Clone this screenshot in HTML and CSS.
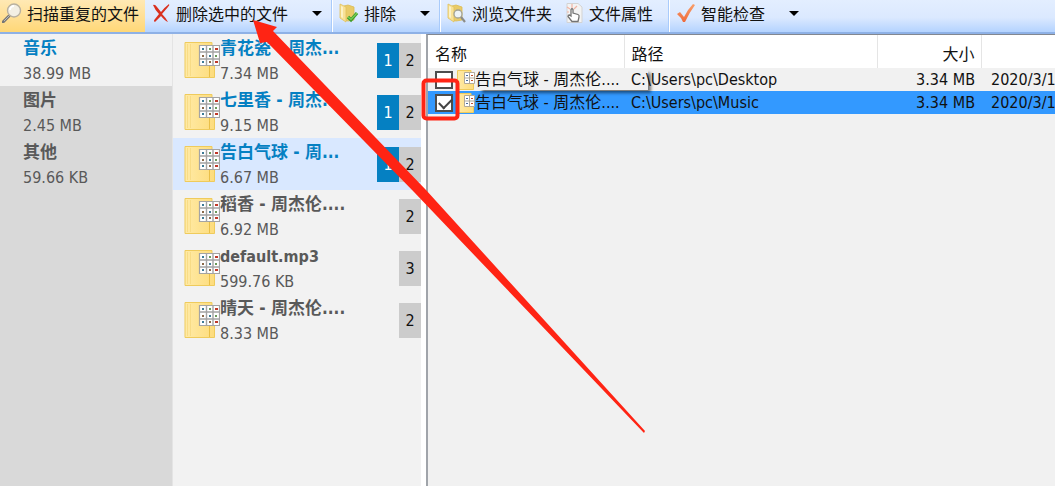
FILE: index.html
```html
<!DOCTYPE html>
<html lang="zh-CN">
<head>
  <meta charset="UTF-8">
  <title>重复文件</title>
  <link rel="stylesheet" href="styles.css">
</head>
<body>
  <svg class="defs" width="0" height="0" aria-hidden="true">
    <defs>
      <linearGradient id="paper" x1="0" x2="1">
        <stop offset="0" stop-color="#ffeaa6"/>
        <stop offset="1" stop-color="#fddc7c"/>
      </linearGradient>
      <linearGradient id="tick" x1="0" y1="0" x2="0" y2="1">
        <stop offset="0" stop-color="#f9a06a"/>
        <stop offset="1" stop-color="#ee6a3c"/>
      </linearGradient>
    </defs>
    <symbol id="folder" viewBox="0 0 36 38">
      <path d="M1 1.500H28V5H30.500V36.500H1Z" fill="url(#paper)" stroke="#efcb5c"/>
      <path d="M3.500 3V35M6.500 3V35" fill="none" stroke="#f8dc86"/>
      <path d="M25.500 24V36" fill="none" stroke="#e9bf48"/>
      <path d="M15.500 4.500H35.500V24.500H15.500Z" fill="#fff" stroke="#a4a4a4" stroke-width="1.200"/>
      <path d="M22.500 4V24M29 4V24M15 11H36M15 18H36" stroke="#a4a4a4" stroke-width="1.400"/>
      <g fill="#3c7a96"><path d="M18 7h2v2h-2zM25 14h2v2h-2zM18 20h2v2h-2z"/></g>
      <g fill="#6a9a5a"><path d="M25 7h2v2h-2zM31 14h2v2h-2z"/></g>
      <g fill="#c0392b"><path d="M31 7h3v2h-3zM31 20h3v2h-3z"/></g>
      <g fill="#8a6a4a"><path d="M18 14h2v2h-2zM25 20h2v2h-2z"/></g>
    </symbol>
    <symbol id="folder-small" viewBox="0 0 18 20">
      <path d="M.5.500H14V3H16.500V19.500H.5Z" fill="url(#paper)" stroke="#efcb5c"/>
      <path d="M7.500 2.500H17.500V13.500H7.500ZM12.500 2.500V13.500M7.500 8H17.500" fill="#fff" stroke="#b0a99a"/>
      <path d="M9 5h2v1H9zM9 10h2v1H9z" fill="#4a6ea0"/>
      <path d="M14 5h2v1h-2zM14 10h2v1h-2z" fill="#c0502b"/>
    </symbol>
    <symbol id="folder-tool" viewBox="0 0 20 20">
      <path d="M5 3L9 2L15 4V17L9 18L5 17Z" fill="#e9cb68" stroke="#dcbb52" stroke-width=".8"/>
      <path d="M1 1L7 4V19L1 15Z" fill="#f8e196" stroke="#e0c05a" stroke-width=".8"/>
      <path d="M2 3L4 4V15L2 14Z" fill="#fdf2c4"/>
    </symbol>
  </svg>

  <header class="toolbar">
    <button class="tool tool-scan" type="button">
      <svg class="tool-icon" viewBox="0 0 20 20">
        <path d="M7 13L1 19" stroke="#777" stroke-width="3" stroke-linecap="round"/>
        <path d="M8 12L2 18" stroke="#bbb" stroke-width="1"/>
        <circle cx="12" cy="7.500" r="6.500" fill="#f3efe4" stroke="#b9b1a0" stroke-width="1.400"/>
        <path d="M8 7a4 4 0 0 1 4-4" fill="none" stroke="#fff" stroke-width="2"/>
      </svg>
      <span>扫描重复的文件</span>
    </button>
    <button class="tool tool-menu" type="button">
      <svg class="tool-icon" viewBox="0 0 20 20">
        <path d="M2 2Q4 1 6 4L10 9Q14 4 18 1Q19 2 17 4L11 11Q15 15 17 19Q14 18 10 13Q6 17 4 19Q2 18 4 16L8 11Q4 7 2 2Z" fill="#d9301f"/>
      </svg>
      <span>删除选中的文件</span>
      <i class="caret"></i>
    </button>
    <button class="tool tool-menu group" type="button">
      <svg class="tool-icon" viewBox="0 0 20 20">
        <use href="#folder-tool"/>
        <path d="M9 14L12 17L18 10" fill="none" stroke="#3d9c2c" stroke-width="3.200"/>
        <path d="M9 14L12 16.500L18 10" fill="none" stroke="#7ccf55" stroke-width="1.200"/>
      </svg>
      <span>排除</span>
      <i class="caret"></i>
    </button>
    <button class="tool group" type="button">
      <svg class="tool-icon" viewBox="0 0 20 20">
        <use href="#folder-tool"/>
        <circle cx="11" cy="11" r="4" fill="#eef3f5" stroke="#a2a294" stroke-width="1.300"/>
        <path d="M14 14L18 19" stroke="#8c8c88" stroke-width="2.200"/>
      </svg>
      <span>浏览文件夹</span>
    </button>
    <button class="tool tool-last" type="button">
      <svg class="tool-icon" viewBox="0 0 20 20">
        <path d="M3 .5H14L18 4V19.500H3Z" fill="#f3f3f3" stroke="#d3d3d3"/>
        <path d="M8 1V5M3 4L6 6M13 3L10 6M3 9H5" stroke="#f1b4a4" stroke-width="1.200"/>
        <path d="M7 13V6.500Q8 5 9 6.500V10L14 11.500Q15.500 12 15 14L14 18.500H8L4 13.500Q4 12 5.500 12Z" fill="#fff" stroke="#737373" stroke-width="1.300"/>
      </svg>
      <span>文件属性</span>
    </button>
    <button class="tool tool-menu group" type="button">
      <svg class="tool-icon" viewBox="0 0 20 20">
        <path d="M1 11L4 9L8 14Q12 6 17 1L19 2Q13 10 9 19H7Q5 14 1 11Z" fill="url(#tick)"/>
      </svg>
      <span>智能检查</span>
      <i class="caret"></i>
    </button>
  </header>

  <main class="panes">
    <nav class="categories">
      <button class="entry active" type="button"><b>音乐</b><span>38.99 MB</span></button>
      <button class="entry" type="button"><b>图片</b><span>2.45 MB</span></button>
      <button class="entry" type="button"><b>其他</b><span>59.66 KB</span></button>
    </nav>

    <section class="files">
      <button class="file marked" type="button">
        <svg class="file-icon"><use href="#folder"/></svg>
        <span class="entry"><b>青花瓷 - 周杰...</b><span>7.34 MB</span></span>
        <span class="count picked">1</span><span class="count">2</span>
      </button>
      <button class="file marked" type="button">
        <svg class="file-icon"><use href="#folder"/></svg>
        <span class="entry"><b>七里香 - 周杰...</b><span>9.15 MB</span></span>
        <span class="count picked">1</span><span class="count">2</span>
      </button>
      <button class="file marked current" type="button">
        <svg class="file-icon"><use href="#folder"/></svg>
        <span class="entry"><b>告白气球 - 周...</b><span>6.67 MB</span></span>
        <span class="count picked">1</span><span class="count">2</span>
      </button>
      <button class="file" type="button">
        <svg class="file-icon"><use href="#folder"/></svg>
        <span class="entry"><b>稻香 - 周杰伦....</b><span>6.92 MB</span></span>
        <span class="count">2</span>
      </button>
      <button class="file" type="button">
        <svg class="file-icon"><use href="#folder"/></svg>
        <span class="entry"><b class="latin">default.mp3</b><span>599.76 KB</span></span>
        <span class="count">3</span>
      </button>
      <button class="file" type="button">
        <svg class="file-icon"><use href="#folder"/></svg>
        <span class="entry"><b>晴天 - 周杰伦....</b><span>8.33 MB</span></span>
        <span class="count">2</span>
      </button>
    </section>

    <section class="details">
      <table>
        <colgroup><col class="col-name"><col class="col-path"><col class="col-size"><col></colgroup>
        <thead>
          <tr><th>名称</th><th>路径</th><th class="num">大小</th><th></th></tr>
        </thead>
        <tbody>
          <tr>
            <td class="name">
              <div class="name-box">
                <input type="checkbox" id="dup1">
                <svg class="row-icon"><use href="#folder-small"/></svg>
                <label for="dup1">告白气球 - 周杰伦....</label>
                <span class="tip"></span>
              </div>
            </td>
            <td>C:\Users\pc\Desktop</td>
            <td class="num">3.34 MB</td>
            <td>2020/3/1</td>
          </tr>
          <tr class="selected">
            <td class="name">
              <div class="name-box">
                <input type="checkbox" id="dup2" checked>
                <svg class="row-icon"><use href="#folder-small"/></svg>
                <label for="dup2">告白气球 - 周杰伦....</label>
              </div>
            </td>
            <td>C:\Users\pc\Music</td>
            <td class="num">3.34 MB</td>
            <td>2020/3/1</td>
          </tr>
        </tbody>
      </table>
    </section>
  </main>

  <!-- red pointer and frame drawn over the window -->
  <svg class="marks" width="660" height="440" viewBox="0 0 660 440" aria-hidden="true">
    <path d="M253 20L277 27L273 31L426 190L645 431L644 433L414 192L267 42L260 43Z" fill="#ff2414"/>
    <rect x="423.500" y="80.500" width="34" height="38" rx="3" fill="none" stroke="#ff2414" stroke-width="4"/>
  </svg>
</body>
</html>
```
FILE: styles.css
```css
:root {
  --accent: #0580c2;
  --pane: #f2f2f2;
  --text: #595959;
}
* { box-sizing: border-box; margin: 0; padding: 0; }
body {
  display: flex;
  flex-direction: column;
  min-height: 100vh;
  overflow: hidden;
  position: relative;
  background: #fff;
  color: #111;
  font-family: "DejaVu Sans Condensed", "Noto Sans CJK SC", sans-serif;
  font-size: 16px;
}
button {
  border: none;
  background: none;
  color: inherit;
  font: inherit;
  text-align: left;
}
.defs { position: absolute; }

/* toolbar */
.toolbar {
  display: flex;
  height: 34px;
  border-bottom: 2px solid #8eb1e6;
  background: linear-gradient(#e3eeff, #dbe9ff 55%, #b4d3ff);
}
.tool {
  display: flex;
  align-items: center;
  gap: 5px;
  padding: 0 6px 6px;
  white-space: nowrap;
}
.tool-scan {
  padding-left: 2px;
  padding-right: 6px;
  background: linear-gradient(#ffe9b4, #ffe097 50%, #ffd877);
}
.tool-menu { padding-right: 9px; }
.tool-last { margin-right: 9px; }
.group { box-shadow: -1px 0 #fff, -2px 0 #a9cbfb; margin-left: 2px; }
.tool-icon { width: 20px; height: 20px; flex: none; }
.caret {
  margin-left: 19px;
  border: 5px solid transparent;
  border-top-color: #000;
  border-bottom: 0;
}

.panes { display: flex; flex: 1; }

/* name over size */
.entry {
  display: flex;
  flex-direction: column;
  height: 52px;
  padding-top: 2px;
  line-height: 25px;
  color: var(--text);
  white-space: nowrap;
}
.entry b { font-size: 17px; height: 25px; }
.entry .latin { font-size: 16px; }
.active b, .marked b { color: var(--accent); }

.categories {
  flex: 0 0 173px;
  display: flex;
  flex-direction: column;
  border-right: 1px solid #e4e4e4;
  background: #d9d9d9;
}
.categories .entry { padding-left: 23px; }
.categories .active { background: var(--pane); }

.files {
  flex: 0 0 248px;
  background: var(--pane);
}
.file {
  display: flex;
  width: 100%;
  height: 52px;
  padding-left: 11px;
}
.file .entry { flex: 1; min-width: 0; }
.file-icon { width: 36px; height: 38px; margin-top: 7px; flex: none; }
.current { background: #d9e8ff; }
.count {
  width: 22px;
  height: 35px;
  margin-top: 9px;
  background: #ccc;
  line-height: 35px;
  text-align: center;
}
.picked { background: var(--accent); color: #fff; }

/* duplicate list */
.details {
  flex: 1;
  min-width: 0;
  margin-left: 5px;
  border-left: 2px solid #a0a4aa;
  border-top: 1px solid #83878f;
  background: #f1f1f1;
}
table {
  width: 100%;
  table-layout: fixed;
  border-collapse: collapse;
}
.col-name { width: 196px; }
.col-path { width: 253px; }
.col-size { width: 104px; }
th {
  height: 33px;
  padding: 2px 7px 0;
  border-right: 1px solid #e5e5e5;
  background: #fff;
  font-weight: normal;
  text-align: left;
}
th:last-child { border-right: 0; }
td {
  height: 23px;
  padding: 0 0 0 7px;
  line-height: 23px;
  white-space: nowrap;
}
td:last-child { padding-left: 10px; }
.num { text-align: right; padding-right: 6px; }
.selected { background: #3399ff; }
.name-box {
  display: flex;
  align-items: center;
  height: 23px;
  position: relative;
}
.row-icon { width: 18px; height: 20px; margin-left: 4px; flex: none; }
input[type="checkbox"] {
  appearance: none;
  flex: none;
  width: 18px;
  height: 18px;
  border: 2px solid #4d4d4d;
  background: #fff;
}
input:checked::after {
  content: '';
  display: block;
  width: 11px;
  height: 6px;
  margin: 2px 0 0 2px;
  border: solid #444;
  border-width: 0 0 2px 2px;
  transform: rotate(-45deg);
}
.tip {
  position: absolute;
  left: 44px;
  top: 2px;
  width: 169px;
  height: 20px;
  box-shadow: 3px 3px 3px rgba(0, 0, 0, 0.5);
}

.marks {
  position: absolute;
  left: 0;
  top: 0;
  pointer-events: none;
}
```
